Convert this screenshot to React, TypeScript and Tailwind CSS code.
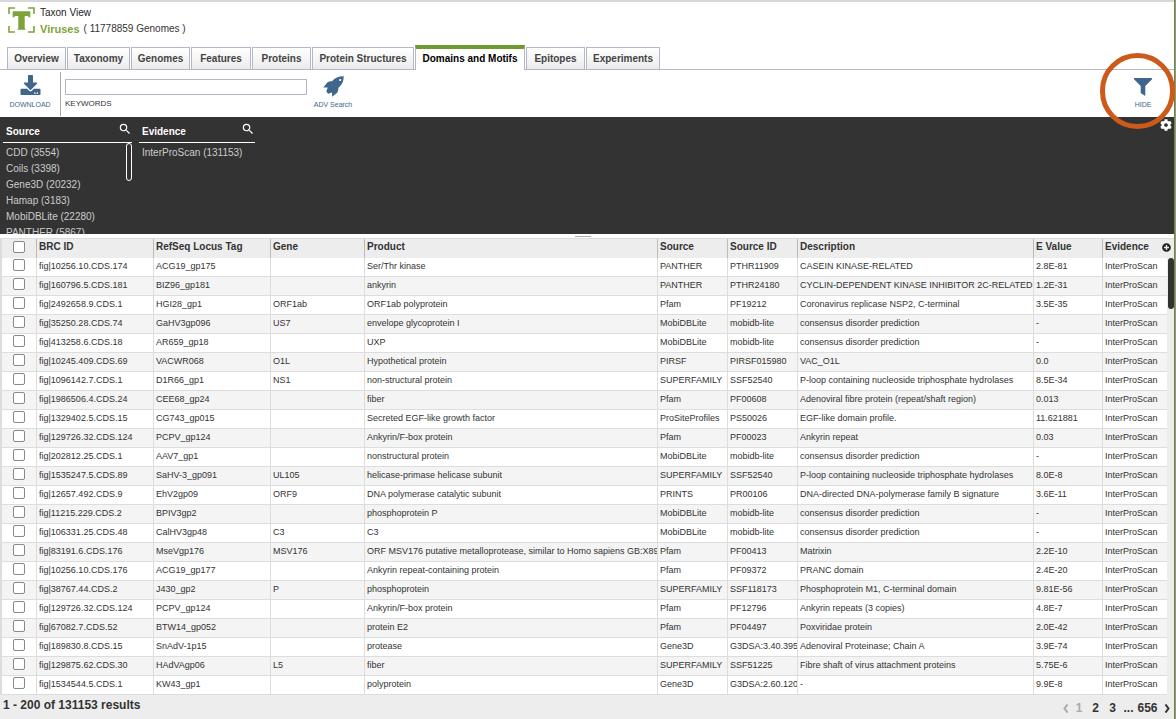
import React, { useState } from 'react';
import { FaCog, FaDownload, FaPlusCircle } from 'react-icons/fa';
import { MdSearch } from 'react-icons/md';

const tabs = [
  { label: 'Overview', width: 'w-[59px]' },
  { label: 'Taxonomy', width: 'w-[63px]' },
  { label: 'Genomes', width: 'w-[59px]' },
  { label: 'Features', width: 'w-[60px]' },
  { label: 'Proteins', width: 'w-[59px]' },
  { label: 'Protein Structures', width: 'w-[102px]' },
  { label: 'Domains and Motifs', width: 'w-[110px]' },
  { label: 'Epitopes', width: 'w-[59px]' },
  { label: 'Experiments', width: 'w-[74px]' },
];

const columns = [
  { label: 'BRC ID', width: 'w-[117px]' },
  { label: 'RefSeq Locus Tag', width: 'w-[117px]' },
  { label: 'Gene', width: 'w-[94px]' },
  { label: 'Product', width: '' },
  { label: 'Source', width: 'w-[70px]' },
  { label: 'Source ID', width: 'w-[70px]' },
  { label: 'Description', width: 'w-[236px]' },
  { label: 'E Value', width: 'w-[69px]' },
  { label: 'Evidence', width: 'w-[64px]' },
];

const sources = [
  'CDD (3554)',
  'Coils (3398)',
  'Gene3D (20232)',
  'Hamap (3183)',
  'MobiDBLite (22280)',
  'PANTHER (5867)',
];

// id, locus tag, gene, product, source, source id, description, e value
const rows = [
  ['fig|10256.10.CDS.174', 'ACG19_gp175', '', 'Ser/Thr kinase', 'PANTHER', 'PTHR11909', 'CASEIN KINASE-RELATED', '2.8E-81'],
  ['fig|160796.5.CDS.181', 'BIZ96_gp181', '', 'ankyrin', 'PANTHER', 'PTHR24180', 'CYCLIN-DEPENDENT KINASE INHIBITOR 2C-RELATED', '1.2E-31'],
  ['fig|2492658.9.CDS.1', 'HGI28_gp1', 'ORF1ab', 'ORF1ab polyprotein', 'Pfam', 'PF19212', 'Coronavirus replicase NSP2, C-terminal', '3.5E-35'],
  ['fig|35250.28.CDS.74', 'GaHV3gp096', 'US7', 'envelope glycoprotein I', 'MobiDBLite', 'mobidb-lite', 'consensus disorder prediction', '-'],
  ['fig|413258.6.CDS.18', 'AR659_gp18', '', 'UXP', 'MobiDBLite', 'mobidb-lite', 'consensus disorder prediction', '-'],
  ['fig|10245.409.CDS.69', 'VACWR068', 'O1L', 'Hypothetical protein', 'PIRSF', 'PIRSF015980', 'VAC_O1L', '0.0'],
  ['fig|1096142.7.CDS.1', 'D1R66_gp1', 'NS1', 'non-structural protein', 'SUPERFAMILY', 'SSF52540', 'P-loop containing nucleoside triphosphate hydrolases', '8.5E-34'],
  ['fig|1986506.4.CDS.24', 'CEE68_gp24', '', 'fiber', 'Pfam', 'PF00608', 'Adenoviral fibre protein (repeat/shaft region)', '0.013'],
  ['fig|1329402.5.CDS.15', 'CG743_gp015', '', 'Secreted EGF-like growth factor', 'ProSiteProfiles', 'PS50026', 'EGF-like domain profile.', '11.621881'],
  ['fig|129726.32.CDS.124', 'PCPV_gp124', '', 'Ankyrin/F-box protein', 'Pfam', 'PF00023', 'Ankyrin repeat', '0.03'],
  ['fig|202812.25.CDS.1', 'AAV7_gp1', '', 'nonstructural protein', 'MobiDBLite', 'mobidb-lite', 'consensus disorder prediction', '-'],
  ['fig|1535247.5.CDS.89', 'SaHV-3_gp091', 'UL105', 'helicase-primase helicase subunit', 'SUPERFAMILY', 'SSF52540', 'P-loop containing nucleoside triphosphate hydrolases', '8.0E-8'],
  ['fig|12657.492.CDS.9', 'EhV2gp09', 'ORF9', 'DNA polymerase catalytic subunit', 'PRINTS', 'PR00106', 'DNA-directed DNA-polymerase family B signature', '3.6E-11'],
  ['fig|11215.229.CDS.2', 'BPIV3gp2', '', 'phosphoprotein P', 'MobiDBLite', 'mobidb-lite', 'consensus disorder prediction', '-'],
  ['fig|106331.25.CDS.48', 'CalHV3gp48', 'C3', 'C3', 'MobiDBLite', 'mobidb-lite', 'consensus disorder prediction', '-'],
  ['fig|83191.6.CDS.176', 'MseVgp176', 'MSV176', 'ORF MSV176 putative metalloprotease, similar to Homo sapiens GB:X895', 'Pfam', 'PF00413', 'Matrixin', '2.2E-10'],
  ['fig|10256.10.CDS.176', 'ACG19_gp177', '', 'Ankyrin repeat-containing protein', 'Pfam', 'PF09372', 'PRANC domain', '2.4E-20'],
  ['fig|38767.44.CDS.2', 'J430_gp2', 'P', 'phosphoprotein', 'SUPERFAMILY', 'SSF118173', 'Phosphoprotein M1, C-terminal domain', '9.81E-56'],
  ['fig|129726.32.CDS.124', 'PCPV_gp124', '', 'Ankyrin/F-box protein', 'Pfam', 'PF12796', 'Ankyrin repeats (3 copies)', '4.8E-7'],
  ['fig|67082.7.CDS.52', 'BTW14_gp052', '', 'protein E2', 'Pfam', 'PF04497', 'Poxviridae protein', '2.0E-42'],
  ['fig|189830.8.CDS.15', 'SnAdV-1p15', '', 'protease', 'Gene3D', 'G3DSA:3.40.395', 'Adenoviral Proteinase; Chain A', '3.9E-74'],
  ['fig|129875.62.CDS.30', 'HAdVAgp06', 'L5', 'fiber', 'SUPERFAMILY', 'SSF51225', 'Fibre shaft of virus attachment proteins', '5.75E-6'],
  ['fig|1534544.5.CDS.1', 'KW43_gp1', '', 'polyprotein', 'Gene3D', 'G3DSA:2.60.120', '-', '9.9E-8'],
];

export default function App() {
  const [active, setActive] = useState('Domains and Motifs');

  return (
    <div className="flex bg-white font-['Liberation_Sans',Arial,sans-serif] text-[#333]">
      <div className="min-w-0 flex-1 border-t-2 border-[#d8d8d8]">
        <Header />
        <nav className="flex h-[25px] items-end gap-px border-b border-[#b3b7c8] pl-[7px]">
          {tabs.map((tab) => (
            <Tab key={tab.label} label={tab.label} width={tab.width} active={tab.label === active} onClick={() => setActive(tab.label)} />
          ))}
        </nav>
        <Toolbar />
        <FilterPanel />
        <div className="flex h-1 items-center justify-center pr-2">
          <div className="h-px w-4 bg-[#aaa]" />
        </div>
        <Grid />
        <Footer />
      </div>
      <div className="w-[2px] border-l border-[#777] bg-[#8aa54c]" />
    </div>
  );
}

function Header() {
  return (
    <header className="flex h-[43px] items-start gap-[5px] pt-[3px] pl-2">
      <svg viewBox="0 0 27 26" className="mt-[2px] h-[26px] w-[27px]" fill="none">
        <path d="M1 7V1h6M20 1h6v6M26 19v6h-6M7 25H1v-6" stroke="#7fa33b" strokeWidth="1.6" />
        <path d="M4.700 4.300h17.600v6h-1.600l-.7-1.300h-3.300v12l1 1.800H9.300l1-1.800V9H7L6.300 10.300H4.700z" fill="#7fa33b" />
      </svg>
      <div className="text-[10px] leading-4">
        <div className="text-[#222]">Taxon View</div>
        <div className="flex items-center gap-1">
          <a href="#viruses" className="text-[11px] font-bold text-[#7fa33b]">Viruses</a>
          <span>( 11778859 Genomes )</span>
        </div>
      </div>
    </header>
  );
}

function Tab({ label, width, active, onClick }: { label: string; width: string; active: boolean; onClick: () => void }) {
  return (
    <button
      onClick={onClick}
      className={`${width} ${
        active
          ? '-mb-px h-[25px] border-t-4 border-t-[#6f9a2e] border-x-[#b3b7c8] bg-white pb-px text-black'
          : 'h-[22px] border-t border-[#b3b7c8] bg-gradient-to-b from-white to-[#ebebeb] text-[#444]'
      } flex shrink-0 items-center justify-center border-x text-[10px] leading-4 font-bold whitespace-nowrap`}
    >
      {label}
    </button>
  );
}

function Toolbar() {
  return (
    <div className="flex h-[47px] items-start text-[7px] leading-3 text-[#3f668d]">
      <button className="mt-[2px] flex h-[44px] w-[61px] flex-col items-center border-r border-[#aaa] pt-[3px]">
        <FaDownload className="h-[20px] w-[21px]" />
        <span className="mt-[4px]">DOWNLOAD</span>
      </button>
      <div className="ml-1 flex w-[242px] flex-col pt-[9px]">
        <input id="keywords" type="text" className="h-4 w-full border border-[#b3b7c8] bg-white px-1 text-[10px] text-[#333] outline-none" />
        <label htmlFor="keywords" className="mt-[3px] text-[8px] text-[#333]">KEYWORDS</label>
      </div>
      <button className="ml-1 flex w-[44px] flex-col items-center pt-[6px] whitespace-nowrap">
        <RocketIcon />
        <span className="mt-[2px]">ADV Search</span>
      </button>
      <div className="relative mr-[20px] ml-auto">
        <button className="flex w-[22px] flex-col items-center pt-[8px]">
          <FilterIcon />
          <span className="mt-[3px]">HIDE</span>
        </button>
        {/* highlight ring over the filter toggle */}
        <div className="pointer-events-none absolute -top-[17px] -left-[32px] h-[76px] w-[75px] rounded-full border-[5px] border-[#cc5b1b]" />
      </div>
    </div>
  );
}

function RocketIcon() {
  return (
    <svg viewBox="0 0 21 21" className="h-[21px] w-[21px]" fill="currentColor" fillRule="evenodd">
      <path d="M20.700.3C15.500.2 12 2 9 5.200Q6.500 4.800 4.300 6.600L.3 11.600l4.400-.2L3.300 15.500 5.200 17.800 9 16.500l.2 4.300 5-4Q15.800 14.500 15.300 12C18.800 9 20.800 5.500 20.700.3zM17.200 2.900a1.100 1.100 0 1 1 0 2.200 1.100 1.100 0 0 1 0-2.200z" />
    </svg>
  );
}

function FilterIcon() {
  return (
    <svg viewBox="0 0 18 18" className="h-[18px] w-[18px]" fill="currentColor">
      <path d="M0 0h18v1.200L11.300 8v10L6.700 15V8L0 1.200z" />
    </svg>
  );
}

function FilterPanel() {
  return (
    <div className="flex h-[117px] items-start gap-[7px] overflow-hidden bg-[#333] pl-[3px] text-[10px] text-[#ccc]">
      <section className="w-[129px]">
        <FilterHeading title="Source" />
        <div className="flex items-start justify-between">
          <ul className="pt-[2px] pl-[3px] leading-4">
            {sources.map((source) => (
              <li key={source}>
                <button>{source}</button>
              </li>
            ))}
          </ul>
          <div className="h-[38px] w-[6px] rounded-full border border-white" />
        </div>
      </section>
      <section className="w-[116px]">
        <FilterHeading title="Evidence" />
        <ul className="pt-[2px] pl-[3px] leading-4">
          <li>
            <button>InterProScan (131153)</button>
          </li>
        </ul>
      </section>
      <button aria-label="Settings" className="mt-[2px] mr-[2px] ml-auto text-white">
        <FaCog className="h-3 w-3" />
      </button>
    </div>
  );
}

function FilterHeading({ title }: { title: string }) {
  return (
    <div className="flex h-[26px] items-center justify-between border-b border-white pt-[3px] pl-[3px] font-bold text-white">
      <span>{title}</span>
      <button aria-label={`Search ${title}`} className="pb-1">
        <MdSearch className="h-[14px] w-[14px]" />
      </button>
    </div>
  );
}

function Grid() {
  return (
    <div className="flex border-t border-l-2 border-[#ddd] bg-[#ededed]">
      <div className="min-w-0 flex-1">
        <table className="w-full table-fixed border-separate border-spacing-0 text-left">
          <colgroup>
            <col className="w-[35px]" />
            {columns.map((column) => (
              <col key={column.label} className={column.width} />
            ))}
          </colgroup>
          <thead>
            <tr className="h-[19px] bg-[#ededed] text-[10px] leading-3">
              <th className="border-r border-[#bbb] p-0">
                <Checkbox label="Select all" />
              </th>
              {columns.map((column) => (
                <th key={column.label} className="border-r border-[#bbb] px-[2px] pt-0 pb-[3px] font-bold whitespace-nowrap last:border-r-0">
                  {column.label}
                </th>
              ))}
            </tr>
          </thead>
          <tbody className="text-[9px] leading-3">
            {rows.map((row, i) => (
              <tr key={i} className="h-[19px] bg-white even:bg-[#f4f4f4]">
                <td className="border-r border-b border-[#ddd] p-0">
                  <Checkbox label={`Select ${row[0]}`} />
                </td>
                {[...row, 'InterProScan'].map((cell, j) => (
                  <td key={j} className="overflow-hidden border-r border-b border-[#ddd] pt-0 pr-0 pb-[2px] pl-[2px] whitespace-nowrap last:border-r-0">
                    {cell}
                  </td>
                ))}
              </tr>
            ))}
          </tbody>
        </table>
      </div>
      <div className="flex w-[7px] flex-col items-end">
        <button aria-label="Choose columns" className="flex h-[17px] w-3 shrink-0 items-center text-[#222]">
          <FaPlusCircle className="h-[9px] w-[9px] shrink-0" />
        </button>
        <div className="mt-[2px] h-[51px] w-[6px] rounded-full bg-[#333]" />
      </div>
    </div>
  );
}

function Checkbox({ label }: { label: string }) {
  return (
    <input
      type="checkbox"
      aria-label={label}
      className="mx-auto mb-1 block h-3 w-3 appearance-none rounded-[2px] border border-[#888] bg-white checked:bg-[#3f668d]"
    />
  );
}

function Footer() {
  return (
    <footer className="flex h-[25px] items-start justify-between border-b border-[#ddd] bg-[#ededed] pl-[3px] text-[12px] leading-4 font-bold">
      <span className="pt-[2px]">1 - 200 of 131153 results</span>
      <div className="flex items-center pt-[5px] pr-[4px]">
        <button aria-label="Previous page" className="w-[9px] text-[#aaa]">
          <svg viewBox="0 0 6 9" className="h-[9px] w-[6px]" fill="none" stroke="currentColor" strokeWidth="2">
            <path d="M4.500.5l-3 4 3 4" />
          </svg>
        </button>
        <button className="w-[14px] text-[#aaa]">1</button>
        <button className="w-[19px]">2</button>
        <button className="w-[15px]">3</button>
        <span className="w-[17px] text-center">...</span>
        <button className="w-[21px]">656</button>
        <button aria-label="Next page" className="flex w-[12px] justify-end">
          <svg viewBox="0 0 6 9" className="h-[9px] w-[6px]" fill="none" stroke="currentColor" strokeWidth="2">
            <path d="M1.500.5l3 4-3 4" />
          </svg>
        </button>
      </div>
    </footer>
  );
}
